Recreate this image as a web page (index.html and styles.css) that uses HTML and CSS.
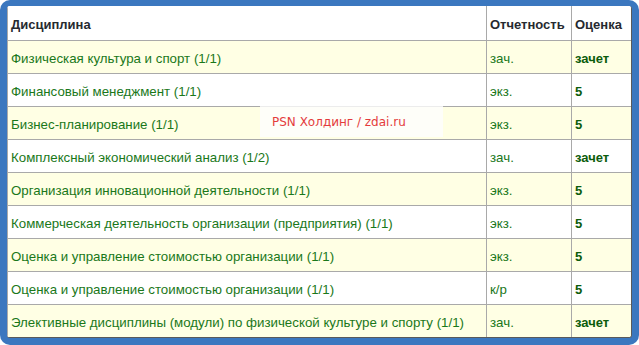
FILE: index.html
```html
<!DOCTYPE html>
<html lang="ru">
<head>
<meta charset="utf-8">
<title>Оценки</title>
<link rel="stylesheet" href="styles.css">
</head>
<body>
<div class="frame">
  <div class="inner">
    <table class="grades">
      <colgroup>
        <col class="c-name">
        <col class="c-type">
        <col class="c-mark">
      </colgroup>
      <thead>
        <tr><th>Дисциплина</th><th>Отчетность</th><th>Оценка</th></tr>
      </thead>
      <tbody>
        <tr class="odd"><td>Физическая культура и спорт (1/1)</td><td>зач.</td><td class="mark">зачет</td></tr>
        <tr><td>Финансовый менеджмент (1/1)</td><td>экз.</td><td class="mark">5</td></tr>
        <tr class="odd"><td>Бизнес-планирование (1/1)</td><td>экз.</td><td class="mark">5</td></tr>
        <tr><td>Комплексный экономический анализ (1/2)</td><td>зач.</td><td class="mark">зачет</td></tr>
        <tr class="odd"><td>Организация инновационной деятельности (1/1)</td><td>экз.</td><td class="mark">5</td></tr>
        <tr><td>Коммерческая деятельность организации (предприятия) (1/1)</td><td>экз.</td><td class="mark">5</td></tr>
        <tr class="odd"><td>Оценка и управление стоимостью организации (1/1)</td><td>экз.</td><td class="mark">5</td></tr>
        <tr><td>Оценка и управление стоимостью организации (1/1)</td><td>к/р</td><td class="mark">5</td></tr>
        <tr class="odd"><td>Элективные дисциплины (модули) по физической культуре и спорту (1/1)</td><td>зач.</td><td class="mark">зачет</td></tr>
      </tbody>
    </table>
  </div>
</div>
<div class="watermark">PSN Холдинг / zdai.ru</div>
</body>
</html>
```

FILE: styles.css
```css
html, body {
  margin: 0;
  padding: 0;
  background: #ffffff;
}

body {
  position: relative;
  width: 639px;
  height: 345px;
  overflow: hidden;
}

.frame {
  width: 639px;
  box-sizing: border-box;
  padding: 6px 7px 7px 7px;
  background: #3b77bf;
  border-radius: 10px;
}

.inner {
  background: #ffffff;
  border-radius: 3px;
  overflow: hidden;
  border-right: 1px solid #5a5a5a;
  border-bottom: 1px solid #5a5a5a;
}

.grades {
  width: 624px;
  border-collapse: collapse;
  table-layout: fixed;
  font-family: "Liberation Sans", Arial, sans-serif;
  font-size: 13.3px;
}

.c-name { width: 479px; }
.c-type { width: 85px; }
.c-mark { width: 60px; }

.grades th,
.grades td {
  height: 30px;
  padding: 2px 3px 0 3px;
  border: 1px solid #a9a9a9;
  text-align: left;
  white-space: nowrap;
  overflow: hidden;
  vertical-align: middle;
}

.grades thead th { border-top: none; height: 32px; }
.grades tr > :last-child { border-right: none; }
.grades tbody tr:last-child td { border-bottom: none; }

.grades th {
  font-weight: bold;
  font-size: 13px;
  color: #262a30;
  background: #ffffff;
}

.grades td {
  color: #1a781a;
}

.grades tr.odd td {
  background: #ffffe4;
}

.grades td.mark {
  font-weight: bold;
  font-size: 13px;
  color: #0c5c0c;
}

.watermark {
  position: absolute;
  left: 260px;
  top: 106px;
  width: 183px;
  height: 31px;
  box-sizing: border-box;
  border-top: 1px solid #ececec;
  background: #fefef9;
  color: #e43c3c;
  font-family: "DejaVu Sans", Verdana, sans-serif;
  font-size: 12px;
  line-height: 31px;
  padding-left: 12px;
}
```
